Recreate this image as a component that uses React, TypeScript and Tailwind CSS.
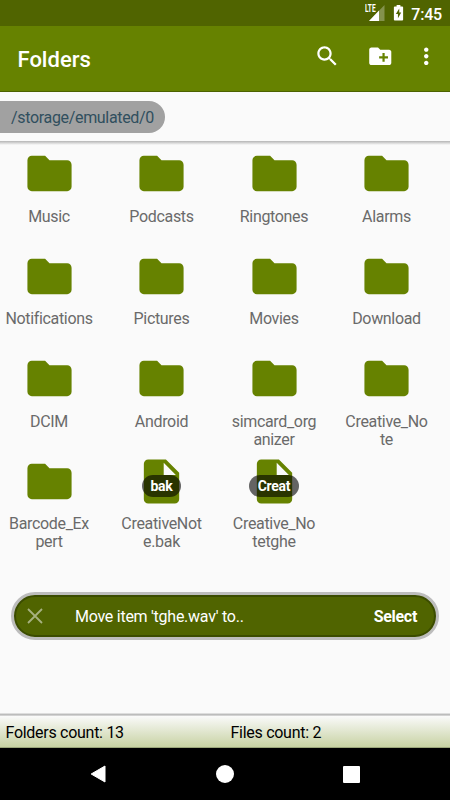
// zero-width spaces mark the preferred wrap point of a long name
const folders = [
  "Music",
  "Podcasts",
  "Ringtones",
  "Alarms",
  "Notifications",
  "Pictures",
  "Movies",
  "Download",
  "DCIM",
  "Android",
  "simcard_organizer",
  "Creative_No\u200bte",
  "Barcode_Expert",
];

const files = [
  { name: "CreativeNot\u200be.bak", badge: "bak" },
  { name: "Creative_No\u200btetghe", badge: "Creat" },
];

const FOLDER_PATH =
  "M10 4H4c-1.1 0-1.99.9-1.99 2L2 18c0 1.1.9 2 2 2h16c1.1 0 2-.9 2-2V8c0-1.1-.9-2-2-2h-8l-2-2z";
const FILE_PATH =
  "M6 2c-1.1 0-1.99.9-1.99 2L4 20c0 1.1.89 2 1.99 2H18c1.1 0 2-.9 2-2V8l-6-6H6zm7 7V3.5L18.5 9H13z";
const SEARCH_PATH =
  "M15.5 14h-.79l-.28-.27C15.41 12.59 16 11.11 16 9.5 16 5.91 13.09 3 9.5 3S3 5.91 3 9.5 5.91 16 9.5 16c1.61 0 3.09-.59 4.23-1.57l.27.28v.79l5 4.99L20.49 19l-4.99-5zm-6 0C7.01 14 5 11.99 5 9.5S7.01 5 9.5 5 14 7.01 14 9.5 11.99 14 9.5 14z";
const NEW_FOLDER_PATH =
  "M20 6h-8l-2-2H4c-1.11 0-1.99.89-1.99 2L2 18c0 1.11.89 2 2 2h16c1.11 0 2-.89 2-2V8c0-1.11-.89-2-2-2zm-1 8h-3v3h-2v-3h-3v-2h3V9h2v3h3v2z";
const MORE_PATH =
  "M12 8c1.1 0 2-.9 2-2s-.9-2-2-2-2 .9-2 2 .9 2 2 2zm0 2c-1.1 0-2 .9-2 2s.9 2 2 2 2-.9 2-2-.9-2-2-2zm0 6c-1.1 0-2 .9-2 2s.9 2 2 2 2-.9 2-2-.9-2-2-2z";

const Icon = ({ path, className }: { path: string; className: string }) => (
  <svg viewBox="0 0 24 24" fill="currentColor" className={className}>
    <path d={path} />
  </svg>
);

const StatusBar = () => (
  <div className="flex h-[26px] shrink-0 items-start justify-end bg-[#506400] pr-[8px] text-white">
    <div className="relative mt-[4px] h-[18px] w-[20px]">
      <svg viewBox="0 0 20 18" className="h-[18px] w-[20px]">
        <path d="M19.5 1v16H4z" fill="#fff" fillOpacity="0.3" />
        <path d="M14 6.5v10.5H4z" fill="#fff" />
      </svg>
      <span className="absolute left-0 top-[1px] origin-left scale-x-[0.66] bg-[#506400] pr-[1px] text-[10px] font-bold leading-[8px]">
        LTE
      </span>
    </div>
    <svg viewBox="0 0 11 17" className="ml-[8px] mt-[5px] h-[16px] w-[11px]">
      <path
        d="M3.5 0h4v1.6h2c.5 0 .9.4.9.9v13.1c0 .5-.4.9-.9.9h-8c-.5 0-.9-.4-.9-.9V2.5c0-.5.4-.9.9-.9h2z"
        fill="#fff"
      />
      <path d="M6.3 3.8 2.7 9.5h2.2v4.6l3.5-6.2H6.3z" fill="#506400" />
    </svg>
    <span className="ml-[7px] mt-[4px] text-[16px] font-medium leading-[21px] tracking-[-0.2px]">
      7:45
    </span>
  </div>
);

const AppBar = () => (
  <header className="flex h-[66px] shrink-0 items-start border-b border-[#4c6200] bg-[#668200] pl-[17.5px] pr-[11px] text-white">
    <h1 className="mt-[19px] flex-1 text-[22px] font-medium leading-[30px]">
      Folders
    </h1>
    <div className="mt-[17px] flex items-center">
      <Icon path={SEARCH_PATH} className="size-[26.5px]" />
      <Icon path={NEW_FOLDER_PATH} className="ml-[26.5px] size-[26.5px]" />
      <Icon path={MORE_PATH} className="ml-[19.5px] size-[26.5px]" />
    </div>
  </header>
);

const Item = ({ name, badge }: { name: string; badge?: string }) => (
  <div className="flex h-[102.5px] flex-col items-center">
    <div className="relative flex h-[53px] items-center justify-center">
      <Icon
        path={badge ? FILE_PATH : FOLDER_PATH}
        className="size-[53px] text-[#668200]"
      />
      {badge && (
        <span className="absolute top-[20.5px] flex h-[22px] items-center rounded-full bg-black/60 px-[8.5px] text-[14px] font-bold leading-none tracking-[-0.25px] text-white">
          {badge}
        </span>
      )}
    </div>
    <p className="mt-[7.8px] w-[88.5px] wrap-break-word text-center text-[16px] leading-[17.8px] tracking-[-0.33px] text-[#6a6a6a]">
      {name}
    </p>
  </div>
);

const App = () => {
  return (
    <div className="flex h-[800px] w-[450px] flex-col overflow-hidden bg-[#fafafa] font-[Roboto,sans-serif]">
      <StatusBar />
      <AppBar />

      <div className="h-[49px] shrink-0 pt-[9px]">
        <div className="flex h-[32px] w-[165px] items-center rounded-r-full bg-[#a1a1a1] pl-[11px] pt-[2px] text-[16px] tracking-[-0.33px] text-[#304f5e]">
          /storage/emulated/0
        </div>
      </div>
      <div className="h-[4px] shrink-0 bg-linear-to-b from-[#b5b5b5] to-[#fafafa]" />

      <main className="flex-1 pt-[2px]">
        <div className="grid w-[436px] grid-cols-[repeat(4,98px)] gap-x-[14.5px]">
          {folders.map((name) => (
            <Item key={name} name={name} />
          ))}
          {files.map((file) => (
            <Item key={file.name} name={file.name} badge={file.badge} />
          ))}
        </div>

        <div className="mx-[11px] mt-[35px] flex h-[48px] items-center rounded-full border-[3px] border-[#bdbdbd] bg-[#506400] pl-[13px] pr-[19px] text-white shadow-[inset_0_0_0_2px_#3b4c00]">
          <svg viewBox="0 0 16 16" className="size-[16px]">
            <path
              d="M1 1l14 14M15 1 1 15"
              stroke="#a7b180"
              strokeWidth="1.8"
              fill="none"
            />
          </svg>
          <span className="ml-[32px] flex-1 pt-[1px] text-[16px] tracking-[-0.26px]">
            Move item 'tghe.wav' to..
          </span>
          <button className="pt-[1px] text-[16px] font-bold tracking-[-0.3px]">
            Select
          </button>
        </div>
      </main>

      <div className="h-[3px] shrink-0 bg-linear-to-b from-[#eeeeee] via-[#bcbcbc] to-[#dddddd]" />
      <footer className="grid h-[32px] shrink-0 grid-cols-2 items-center border-b border-[#9ba67b] bg-linear-to-b from-[#fafafa] to-[#c8d2a3] pt-[2px] text-[16px] tracking-[-0.28px] text-black">
        <span className="pl-[5.5px]">Folders count: 13</span>
        <span className="pl-[5.5px]">Files count: 2</span>
      </footer>

      <nav className="flex h-[52px] shrink-0 items-center bg-black pl-[90px]">
        <svg viewBox="0 0 16 18" className="h-[18px] w-[16px]">
          <path
            d="M15 1v16L1.2 9z"
            fill="#fff"
            stroke="#fff"
            strokeLinejoin="round"
          />
        </svg>
        <div className="ml-[110px] size-[18px] rounded-full bg-white" />
        <div className="ml-[109px] size-[17px] rounded-[1px] bg-white" />
      </nav>
    </div>
  );
};

export default App;
